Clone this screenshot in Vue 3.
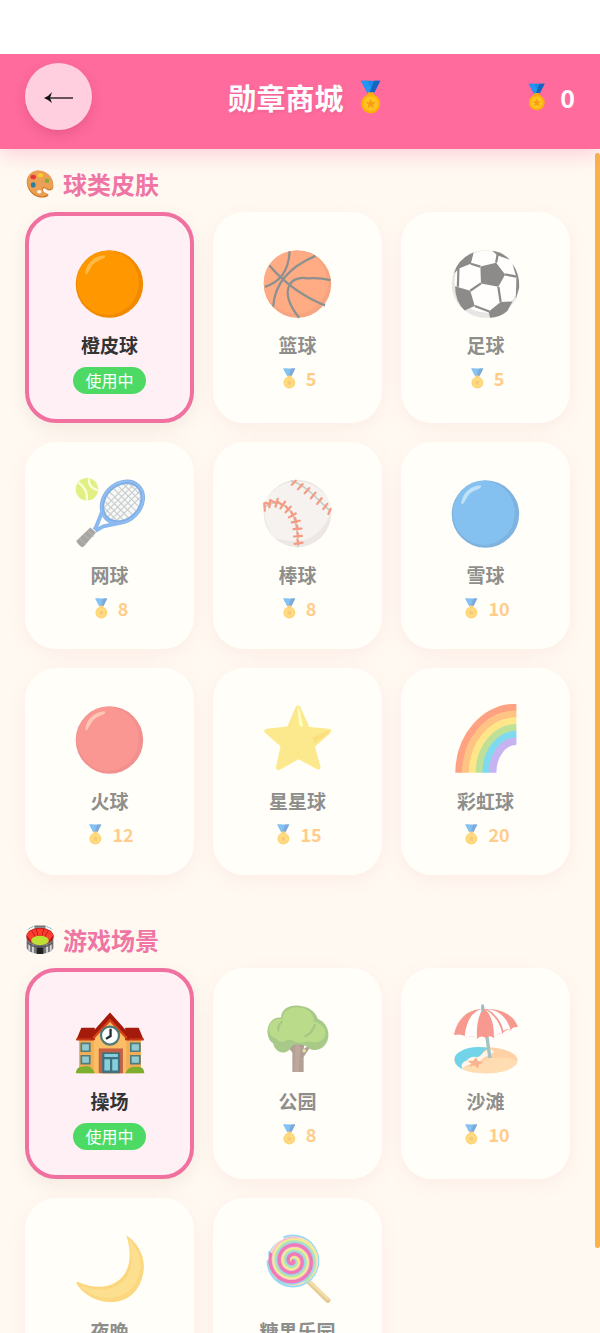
<template>
  <div class="shop">
    <!-- Shared icon set -->
    <svg class="sprite" width="0" height="0" aria-hidden="true">
      <symbol id="icon-medal" viewBox="0 0 128 128">
        <path d="M26 3H99L76 48H50Z" fill="#1e88e5" />
        <path d="M26 3H50L68 34L60 48H50Z" fill="#2196f3" />
        <path d="M76 3H99L76 48H58Z" fill="#1565c0" />
        <rect x="51" y="46" width="25" height="12" rx="5" fill="#f9a825" />
        <circle cx="63" cy="89" r="36" fill="#ffb300" />
        <circle cx="63" cy="89" r="29" fill="#ffc421" stroke="#fbab19" stroke-width="3" />
        <path d="M63 70L68 83L82 84L71 93L75 107L63 99L51 107L55 93L44 84L58 83Z" fill="#f79d13" />
      </symbol>

      <symbol id="icon-palette" viewBox="0 0 128 128">
        <path d="M46 9C82 2 122 30 121 72C121 91 103 97 91 86C82 78 73 83 78 94C84 107 102 104 100 112C94 125 55 128 29 104C-1 76-3 22 46 9Z" fill="#cf7a2b" />
        <path d="M47 7C84 2 120 30 120 67C119 87 103 91 93 82C81 71 68 79 74 92C79 105 96 103 97 108C88 119 53 121 30 98C2 70 1 17 47 7Z" fill="#eba055" />
        <ellipse cx="35" cy="34" rx="12" ry="10" fill="#e53935" />
        <ellipse cx="66" cy="27" rx="12" ry="9" fill="#fdc835" />
        <ellipse cx="94" cy="50" rx="10" ry="10" fill="#8bab42" />
        <ellipse cx="35" cy="68" rx="10" ry="11" fill="#277fa4" />
        <ellipse cx="61" cy="97" rx="9" ry="7" fill="#fff8ef" />
      </symbol>

      <symbol id="icon-stadium" viewBox="0 0 128 128">
        <path d="M7 42V98C17 131 111 131 121 98V42Z" fill="#75757b" />
        <path d="M18 80V113M34 84V120M94 84V120M110 80V113" stroke="#d5d5d5" stroke-width="8" />
        <path d="M50 124V100Q64 82 78 100V124Z" fill="#212121" />
        <ellipse cx="64" cy="48" rx="58" ry="36" fill="#b71c1c" />
        <path d="M7 44C20 7 108 7 121 44L103 65C90 38 38 38 25 65Z" fill="#ff3d2e" />
        <path d="M28 22L43 48M48 14L54 43M80 14L74 43M100 22L85 48" stroke="#b71c1c" stroke-width="4" />
        <ellipse cx="64" cy="66" rx="38" ry="20" fill="#c0df35" />
        <path d="M10 72Q28 90 64 89Q100 90 118 72V80Q96 97 64 97Q32 97 10 80Z" fill="#55585c" />
        <path d="M40 2H88V12H40Z" fill="#777" />
        <path d="M14 19L23 10M27 12L34 5M100 12L93 5M114 19L105 10" stroke="#4b9ed9" stroke-width="4" />
      </symbol>

      <symbol v-for="ball in plainBalls" :id="'icon-' + ball.id" :key="ball.id" viewBox="0 0 128 128">
        <circle cx="63" cy="64" r="60" :fill="ball.edge" />
        <ellipse cx="60" cy="62" rx="55" ry="57" :fill="ball.fill" />
        <path d="M20 43C25 22 40 14 54 13C60 17 46 21 39 25C29 31 26 47 21 47Z" :fill="ball.shine" />
      </symbol>

      <symbol id="icon-basketball" viewBox="0 0 128 128">
        <circle cx="63" cy="64" r="60" fill="#f15c20" />
        <ellipse cx="60" cy="61" rx="57" ry="56" fill="#ff6826" />
        <g fill="none" stroke="#30383a" stroke-width="4">
          <path d="M13 31Q55 79 112 102" />
          <path d="M49 6Q47 56 5 69" />
          <path d="M20 104Q23 45 95 14" />
          <path d="M66 124C31 80 45 48 82 54Q100 52 122 57" />
        </g>
      </symbol>

      <symbol id="icon-soccer" viewBox="0 0 128 128">
        <circle cx="63" cy="64" r="60" fill="#d3d3d3" />
        <ellipse cx="65" cy="60" rx="57" ry="55" fill="#fff" />
        <g fill="#302f2f">
          <path d="M54 33L82 26L98 47L86 69L55 63Z" />
          <path d="M7 45Q15 18 42 8L37 28L17 36Z" />
          <path d="M9 68L36 76L44 103L26 111Q9 95 9 68Z" />
          <path d="M69 113L90 96L111 95L102 112Q88 124 71 124Z" />
          <path d="M75 5Q94 7 106 21L84 13Z" />
          <path d="M111 28Q124 46 123 70L117 91L118 52Z" />
        </g>
        <path d="M37 28L54 33M15 36L14 69M36 76L55 63M82 26L85 10M98 47L118 51M86 69L90 96M44 103L70 113" fill="none" stroke="#302f2f" stroke-width="4" />
      </symbol>

      <symbol id="icon-tennis" viewBox="0 0 128 128">
        <circle cx="23" cy="20" r="20" fill="#c9e323" />
        <path d="M8 8Q25 20 23 40M27 1Q24 16 42 22" fill="none" stroke="#f5ffc1" stroke-width="4" />
        <g transform="rotate(-45 86 43)">
          <ellipse cx="86" cy="43" rx="40" ry="32" fill="#f4f5f7" />
          <g stroke="#9ca5ad" stroke-width="2">
            <path d="M54 27H118M48 35H124M47 43H125M49 51H123M56 59H116" />
            <path d="M56 22V64M65 17V69M74 14V72M83 12V74M92 12V74M101 14V71M110 19V67M118 25V61" />
          </g>
          <ellipse cx="86" cy="43" rx="40" ry="32" fill="none" stroke="#1c6fd6" stroke-width="8" />
          <ellipse cx="86" cy="43" rx="41" ry="33" fill="none" stroke="#3b8ef0" stroke-width="3" />
        </g>
        <path d="M50 60L39 88L36 92M80 80L52 86L38 94" fill="none" stroke="#2a82ea" stroke-width="7" stroke-linejoin="round" />
        <path d="M4 112L29 88L39 97L16 123Q8 121 4 112Z" fill="#60605e" />
        <path d="M10 107L21 118M17 100L28 110M24 94L35 104" stroke="#777775" stroke-width="2" />
      </symbol>

      <symbol id="icon-baseball" viewBox="0 0 128 128">
        <circle cx="63" cy="63" r="60" fill="#ddd4d6" />
        <path d="M5 59C2 18 60-12 101 19C118 31 126 51 121 65C98 116 65 118 22 106C12 96 4 76 5 59Z" fill="#f0e9e9" />
        <g fill="none" stroke="#93aaa2" stroke-width="3">
          <path :d="seamLeft" />
          <path :d="seamRight" />
        </g>
        <g fill="none" stroke="#f04b24" stroke-width="4" stroke-linecap="round">
          <path d="M4 45L5 58M15 39L13 52M28 37L24 51M41 42L33 54M51 51L42 61M60 63L48 70M67 76L53 79M70 90L56 91M71 103L57 104M72 115L58 117" />
          <path d="M13 46L6 44M25 44L17 41M36 48L29 43M47 57L42 50M55 67L52 60M61 79L59 71M64 91L62 84M65 104L63 97M65 117L63 110" />
          <path d="M60 5L53 12M72 11L64 20M84 18L76 27M95 26L87 36M106 36L98 46M116 46L109 55M122 55L118 64" />
        </g>
      </symbol>

      <symbol id="icon-star" viewBox="0 0 128 128">
        <path d="M60 5Q64 0 68 5L84 41L119 44Q126 46 121 52L94 76L104 111Q104 119 96 115L65 98L32 117Q24 119 25 111L33 75L6 52Q1 47 8 44L45 40Z" fill="#fdd835" />
        <path d="M63 8Q67 6 69 20L73 38Q68 44 66 36Z" fill="#ffff8d" />
        <path d="M119 47Q105 51 90 60L93 70L119 52Z" fill="#f8c51a" />
      </symbol>

      <symbol id="icon-rainbow" viewBox="0 0 128 128">
        <path
          v-for="(color, i) in rainbowColors"
          :key="color"
          :d="rainbowBand(i)"
          fill="none"
          :stroke="color"
          stroke-width="13"
        />
      </symbol>

      <symbol id="icon-school" viewBox="0 0 128 128">
        <path d="M9 60H119V123H9Z" fill="#f4ad55" />
        <path d="M35 50L64 22L93 50V123H35Z" fill="#fbbd66" />
        <path d="M13 42H37V64H4ZM91 42H115L124 64H91Z" fill="#a51b0b" />
        <path d="M4 61H36V65H4ZM92 61H124V65H92Z" fill="#c43615" />
        <path d="M31 52L64 15L97 52V65L64 31L31 65Z" fill="#a51b0b" />
        <path d="M34 61L64 29L94 61" fill="none" stroke="#d84315" stroke-width="4" />
        <circle cx="64" cy="56" r="16" fill="#fff" stroke="#4f7a78" stroke-width="4" />
        <path d="M65 44V57L57 62" fill="none" stroke="#1e292d" stroke-width="4" />
        <path d="M44 79H87V123H44Z" fill="#c56046" />
        <path d="M50 86H82V123H50Z" fill="#3d727c" />
        <path d="M54 89H78V94H54ZM54 98H64V118H54ZM68 98H78V118H68Z" fill="#86cfdf" />
        <g fill="#90cbd1" stroke="#527b7c" stroke-width="3">
          <path d="M13 70H28V84H13ZM13 92H28V106H13ZM101 70H117V84H101ZM101 92H117V106H101Z" />
        </g>
        <path d="M3 123Q4 110 18 111Q30 107 37 123ZM91 123Q98 109 111 112Q124 110 125 123Z" fill="#7daf2e" />
      </symbol>

      <symbol id="icon-tree" viewBox="0 0 128 128">
        <path d="M53 66L33 62L54 86V121H74V94L91 69L74 80L78 55H55Z" fill="#765244" />
        <path d="M60 68L57 121H65L68 77Z" fill="#896353" />
        <path d="M10 53C8 35 20 22 34 24C34 8 50 1 66 3C82 4 95 13 99 26C111 31 119 43 118 56C118 75 98 88 84 79Q77 72 64 72Q58 68 48 82C34 93 21 79 20 70Q12 66 10 53Z" fill="#62a02c" />
        <path d="M12 47C12 33 24 24 36 27C37 12 51 5 66 6C83 7 93 19 92 31C110 35 116 49 111 59C103 71 91 68 81 66Q65 73 51 63C42 69 28 69 25 61Q15 59 12 47Z" fill="#80c030" />
        <path d="M35 32Q28 38 29 47M94 37Q89 52 77 57M46 65Q42 72 32 71" fill="none" stroke="#5f9b2c" stroke-width="4" stroke-linecap="round" />
        <circle cx="75" cy="83" r="3" fill="#c5d95c" />
      </symbol>

      <symbol id="icon-beach" viewBox="0 0 128 128">
        <ellipse cx="64" cy="100" rx="56" ry="23" fill="#ffad61" />
        <path d="M22 116C6 108 2 92 19 84C32 76 49 75 69 78Q54 85 57 92Q38 94 22 116Z" fill="#00b3dd" />
        <path d="M22 116Q17 105 29 101Q38 91 50 95Q60 85 70 79L79 85Q70 92 62 94Q51 104 38 106Q25 110 22 116Z" fill="#fff0dc" />
        <path d="M22 116Q32 105 52 106Q66 94 83 96Q103 93 120 101Q116 118 81 122Q43 126 22 116Z" fill="#ffc178" />
        <path d="M31 101L41 101L46 95L51 102L60 104L52 107L50 114L43 109L34 112L38 106Z" fill="#f17838" />
        <path d="M58 5L71 96" stroke="#58939a" stroke-width="6" />
        <path d="M7 55C13 26 32 9 59 9C91 7 114 20 121 41Q111 40 108 47Q99 44 93 53Q82 50 78 61Q71 54 64 61Q56 54 48 62Q42 54 29 60Q22 52 7 55Z" fill="#f4473a" />
        <path d="M58 9Q31 14 26 57L29 60Q42 54 48 62Q46 28 58 9ZM62 9Q79 24 78 61Q82 50 93 53Q87 24 62 9ZM66 9Q98 12 108 47Q101 42 95 48Q89 22 66 9Z" fill="#fff" />
        <path d="M58 3V12" stroke="#4b8f96" stroke-width="5" stroke-linecap="round" />
      </symbol>

      <symbol id="icon-moon" viewBox="0 0 128 128">
        <path d="M93 2C112 14 126 38 124 62C121 98 98 122 64 121C39 120 16 108 4 87Q5 83 9 86C33 96 57 97 76 85C101 68 104 37 93 2Z" fill="#f9b91f" />
        <path d="M96 9C116 28 123 52 116 72C108 99 83 116 56 113C35 111 19 103 10 91C40 103 65 101 83 88C106 71 106 40 96 9Z" fill="#fdc93a" />
      </symbol>

      <symbol id="icon-lollipop" viewBox="0 0 128 128">
        <path d="M82 84L117 118" stroke="#d1a447" stroke-width="9" stroke-linecap="round" />
        <path d="M82 82L118 116" stroke="#edc66a" stroke-width="4" />
        <circle cx="55" cy="48" r="47" fill="#3fbdf5" />
        <circle cx="56" cy="48" r="44" fill="#f7c98a" />
        <g fill="none" stroke-linecap="round">
          <path :d="spiral(1.5)" stroke="#f58cbc" stroke-width="5" />
          <path :d="spiral(2.7)" stroke="#efe03a" stroke-width="5" />
          <path :d="spiral(3.9)" stroke="#7fd672" stroke-width="5" />
          <path :d="spiral(5.1)" stroke="#55b0e8" stroke-width="5" />
          <path :d="spiral(0)" stroke="#e5107f" stroke-width="6" />
        </g>
        <path d="M12 27Q20 12 35 7M8 44V35" fill="none" stroke="#fff" stroke-width="7" stroke-linecap="round" />
      </symbol>
    </svg>

    <div class="status-bar"></div>

    <header class="shop-header">
      <button type="button" class="back-btn" aria-label="返回">
        <svg viewBox="0 0 30 12" width="30" height="12">
          <path d="M5 7H29" stroke="#111" stroke-width="1.3" />
          <path d="M0 7Q5 5 8 1L6 7L8 12Q5 9 0 7Z" fill="#111" />
        </svg>
      </button>
      <h1 class="shop-title">
        勋章商城
        <svg class="title-medal"><use href="#icon-medal" /></svg>
      </h1>
      <div class="balance">
        <svg class="balance-medal"><use href="#icon-medal" /></svg>
        <span>{{ medals }}</span>
      </div>
    </header>

    <main class="shop-body">
      <div class="scroll-area">
        <section v-for="section in sections" :key="section.title" class="shop-section">
          <h2 class="section-title">
            <svg class="section-icon"><use :href="'#icon-' + section.icon" /></svg>
            {{ section.title }}
          </h2>
          <div class="item-grid">
            <button
              v-for="item in section.items"
              :key="item.name"
              type="button"
              class="item-card"
              :class="item.price ? 'locked' : 'active'"
            >
              <svg class="item-icon"><use :href="'#icon-' + item.icon" /></svg>
              <span class="item-name">{{ item.name }}</span>
              <span v-if="item.price" class="item-price">
                <svg class="price-medal"><use href="#icon-medal" /></svg>
                {{ item.price }}
              </span>
              <span v-else class="item-badge">使用中</span>
            </button>
          </div>
        </section>
      </div>
      <div class="scroll-thumb"></div>
    </main>
  </div>
</template>

<script setup>
import { ref } from 'vue'

const medals = ref(0)

// price 0 = owned and in use
const sections = [
  {
    title: '球类皮肤',
    icon: 'palette',
    items: [
      { name: '橙皮球', icon: 'orange', price: 0 },
      { name: '篮球', icon: 'basketball', price: 5 },
      { name: '足球', icon: 'soccer', price: 5 },
      { name: '网球', icon: 'tennis', price: 8 },
      { name: '棒球', icon: 'baseball', price: 8 },
      { name: '雪球', icon: 'blue', price: 10 },
      { name: '火球', icon: 'red', price: 12 },
      { name: '星星球', icon: 'star', price: 15 },
      { name: '彩虹球', icon: 'rainbow', price: 20 }
    ]
  },
  {
    title: '游戏场景',
    icon: 'stadium',
    items: [
      { name: '操场', icon: 'school', price: 0 },
      { name: '公园', icon: 'tree', price: 8 },
      { name: '沙滩', icon: 'beach', price: 10 },
      { name: '夜晚', icon: 'moon', price: 12 },
      { name: '糖果乐园', icon: 'lollipop', price: 15 }
    ]
  }
]

const plainBalls = [
  { id: 'orange', edge: '#f28a00', fill: '#ff9800', shine: '#ffb945' },
  { id: 'blue', edge: '#1676cb', fill: '#2090ea', shine: '#90caf9' },
  { id: 'red', edge: '#e63838', fill: '#f7443e', shine: '#ff9a83' }
]

const seamLeft = 'M4 52C23 37 49 44 58 75Q64 95 64 123'
const seamRight = 'M51 5C78 11 97 38 122 59'

const rainbowColors = ['#ff5722', '#ff9324', '#ffd52f', '#8ccb48', '#17bee9', '#9b75ee']

const rainbowBand = (i) => {
  const rx = 102 - i * 12
  const ry = 116 - i * 12
  return `M${118 - rx} 122A${rx} ${ry} 0 0 1 118 ${122 - ry}`
}

// Candy swirl
const spiral = (offset) => {
  const points = []
  for (let t = 0; t <= 16; t += 0.2) {
    const r = t * 2.6
    const x = 55 + r * Math.cos(t + offset)
    const y = 48 + r * Math.sin(t + offset)
    points.push(`${x.toFixed(1)} ${y.toFixed(1)}`)
  }
  return 'M' + points.join('L')
}
</script>

<style>
body {
  margin: 0;
}
</style>

<style scoped>
.shop {
  display: flex;
  flex-direction: column;
  height: 100vh;
  background: #fff9f2;
  font-family: "Noto Sans CJK SC", "Noto Sans", sans-serif;
}

.sprite {
  position: absolute;
}

.status-bar {
  position: relative;
  z-index: 2;
  flex: none;
  height: 54px;
  background: #fff;
}

.shop-header {
  position: relative;
  z-index: 1;
  flex: none;
  display: flex;
  align-items: center;
  justify-content: space-between;
  padding: 9px 25px 19px;
  background: #ff6b9d;
  box-shadow: 0 5px 20px rgba(255, 107, 157, 0.3);
  color: #fff;
}

.back-btn {
  display: flex;
  align-items: center;
  justify-content: center;
  width: 67px;
  height: 67px;
  padding: 0;
  border: none;
  border-radius: 50%;
  background: #ffcfe0;
  box-shadow: 0 5px 12px rgba(160, 30, 80, 0.22);
  cursor: pointer;
}

.shop-title {
  display: flex;
  align-items: center;
  gap: 10px;
  margin: 0;
  font-size: 29px;
  line-height: 40px;
  font-weight: 700;
  text-shadow: 1px 2px 3px rgba(120, 30, 80, 0.1);
}

.title-medal {
  width: 34px;
  height: 34px;
}

.balance {
  display: flex;
  align-items: center;
  gap: 9px;
  font-size: 25px;
  line-height: 32px;
  font-weight: 700;
}

.balance-medal {
  width: 28px;
  height: 28px;
}

.shop-body {
  position: relative;
  flex: 1;
  min-height: 0;
}

.scroll-area {
  box-sizing: border-box;
  height: 100%;
  padding: 19px 30px 19px 25px;
  overflow-y: auto;
  scrollbar-width: none;
}

.scroll-thumb {
  position: absolute;
  top: 4px;
  right: 0;
  width: 5px;
  height: 92.5%;
  border-radius: 3px;
  background: #f9b449;
}

.shop-section {
  margin-bottom: 49px;
}

.section-title {
  display: flex;
  align-items: center;
  gap: 8px;
  margin: 0 0 12px;
  font-size: 24px;
  line-height: 32px;
  font-weight: 700;
  color: #ef76a4;
}

.section-icon {
  width: 30px;
  height: 30px;
}

.item-grid {
  display: grid;
  grid-template-columns: repeat(3, 1fr);
  gap: 19px;
}

.item-card {
  display: flex;
  flex-direction: column;
  align-items: center;
  justify-content: flex-start;
  padding: 32px 8px 25px;
  border: 4px solid transparent;
  border-radius: 31px;
  background: #fffef9;
  box-shadow: 0 5px 18px rgba(225, 140, 130, 0.1);
  font-family: inherit;
  color: #333;
  cursor: pointer;
}

.item-card.active {
  border-color: #f0709f;
  background: #fff0f6;
  box-shadow: 0 6px 18px rgba(150, 110, 80, 0.1);
}

.item-icon {
  width: 72px;
  height: 72px;
}

.item-name {
  margin-top: 12px;
  font-size: 19px;
  line-height: 26px;
  font-weight: 700;
}

.item-price {
  display: flex;
  align-items: center;
  gap: 6px;
  margin-top: 9px;
  font-size: 18px;
  line-height: 23px;
  font-weight: 700;
  color: #ffa52e;
}

.price-medal {
  width: 21px;
  height: 21px;
}

.item-badge {
  margin-top: 9px;
  padding: 0 12px;
  border-radius: 14px;
  background: #4cd964;
  font-size: 16px;
  line-height: 27px;
  color: #fff;
}

.locked .item-icon,
.locked .item-name,
.locked .item-price {
  opacity: 0.55;
}
</style>
